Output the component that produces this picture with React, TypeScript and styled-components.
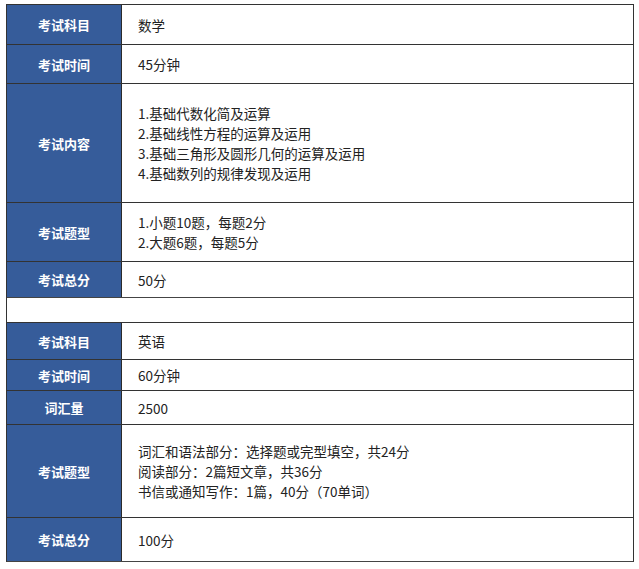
import React from 'react';
import styled, { createGlobalStyle } from 'styled-components';

const GlobalStyle = createGlobalStyle`
  html, body {
    margin: 0;
    padding: 0;
    background: #ffffff;
  }
  body {
    font-family: "Noto Sans CJK SC", "Noto Sans", sans-serif;
  }
`;

const Page = styled.div`
  padding: 4px 0 0 6px;
`;

const Table = styled.div`
  width: 628px;
  box-sizing: border-box;
  border-left: 1px solid #333;
  border-right: 1px solid #333;
  border-bottom: 1px solid #444;
  display: flex;
  flex-direction: column;
`;

const Row = styled.div<{ $h: number }>`
  display: grid;
  grid-template-columns: 115px 1fr;
  height: ${p => p.$h}px;
  box-sizing: border-box;
  border-top: 1px solid #333;
`;

const Blank = styled.div<{ $h: number }>`
  height: ${p => p.$h}px;
  box-sizing: border-box;
  border-top: 1px solid #444;
`;

const Label = styled.div`
  background: #365c9a;
  border-right: 1px solid #2b2b2b;
  color: #ffffff;
  font-size: 13px;
  font-weight: 700;
  display: flex;
  align-items: center;
  justify-content: center;
`;

const Value = styled.div`
  color: #222222;
  font-size: 13.5px;
  line-height: 20px;
  padding-left: 16px;
  display: flex;
  flex-direction: column;
  justify-content: center;
`;

type Item = { label: string; lines: string[]; h: number };

const maths: Item[] = [
  { label: '考试科目', lines: ['数学'], h: 40 },
  { label: '考试时间', lines: ['45分钟'], h: 39 },
  {
    label: '考试内容',
    lines: [
      '1.基础代数化简及运算',
      '2.基础线性方程的运算及运用',
      '3.基础三角形及圆形几何的运算及运用',
      '4.基础数列的规律发现及运用',
    ],
    h: 119,
  },
  { label: '考试题型', lines: ['1.小题10题，每题2分', '2.大题6题，每题5分'], h: 59 },
  { label: '考试总分', lines: ['50分'], h: 36 },
];

const english: Item[] = [
  { label: '考试科目', lines: ['英语'], h: 37 },
  { label: '考试时间', lines: ['60分钟'], h: 31 },
  { label: '词汇量', lines: ['2500'], h: 34 },
  {
    label: '考试题型',
    lines: [
      '词汇和语法部分：选择题或完型填空，共24分',
      '阅读部分：2篇短文章，共36分',
      '书信或通知写作：1篇，40分（70单词）',
    ],
    h: 93,
  },
  { label: '考试总分', lines: ['100分'], h: 44 },
];

const renderRows = (items: Item[]) =>
  items.map((it, i) => (
    <Row key={i} $h={it.h}>
      <Label>{it.label}</Label>
      <Value>
        {it.lines.map((l, j) => (
          <div key={j}>{l}</div>
        ))}
      </Value>
    </Row>
  ));

export default function App() {
  return (
    <>
      <GlobalStyle />
      <Page>
        <Table>
          {renderRows(maths)}
          <Blank $h={25} />
          {renderRows(english)}
        </Table>
      </Page>
    </>
  );
}
